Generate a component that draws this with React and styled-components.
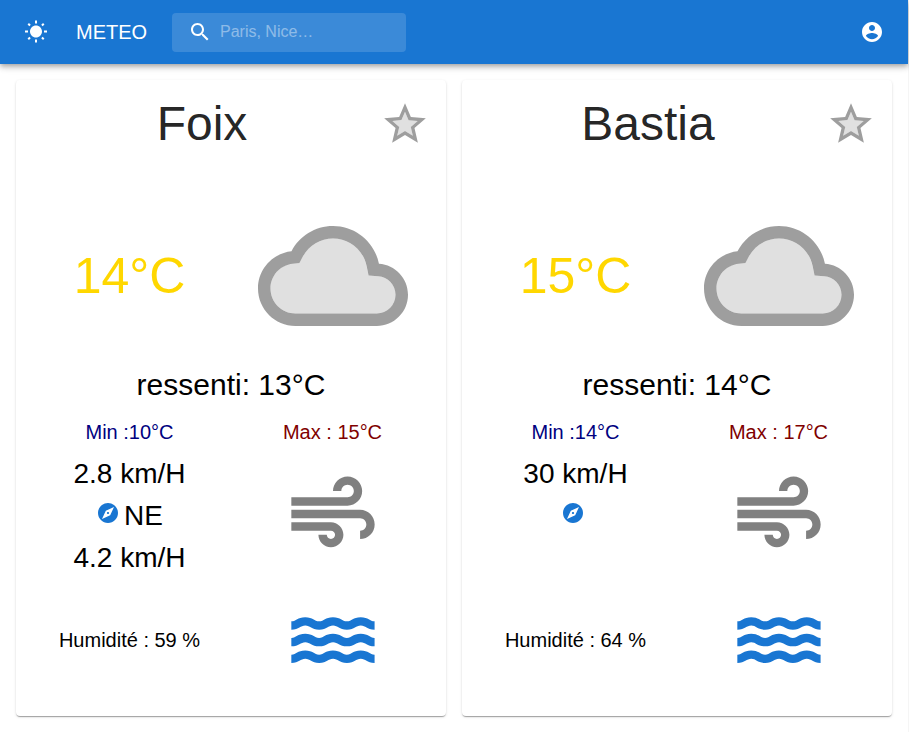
import React from "react";
import styled, { createGlobalStyle } from "styled-components";

const GlobalStyle = createGlobalStyle`
  *, *::before, *::after { box-sizing: border-box; }
  body {
    margin: 0;
    background: #fff;
    color: #000;
    font-family: "Liberation Sans", Arial, sans-serif;
  }
`;

const Page = styled.div`
  min-height: 100vh;
  border-right: 1px solid #f5f5f5;
`;

const AppBar = styled.header`
  display: flex;
  align-items: center;
  height: 64px;
  padding: 0 24px;
  background: #1976d2;
  color: #fff;
  box-shadow: 0 2px 4px -1px rgba(0, 0, 0, 0.2), 0 4px 5px rgba(0, 0, 0, 0.14),
    0 1px 10px rgba(0, 0, 0, 0.12);
`;

const Icon = styled.svg`
  display: block;
  flex: none;
  width: ${(p) => p.$size}px;
  height: ${(p) => p.$size}px;
  color: ${(p) => p.$color || "inherit"};
  fill: currentColor;
`;

const InlineIcon = styled(Icon)`
  display: inline-block;
`;

const Brand = styled.h1`
  min-width: 72px;
  margin: 0 24px 0 28px;
  font-size: 20px;
  font-weight: 400;
  line-height: 32px;
`;

const Search = styled.label`
  display: flex;
  align-items: center;
  gap: 8px;
  width: 234px;
  height: 39px;
  padding: 0 16px;
  border-radius: 4px;
  background: rgba(255, 255, 255, 0.15);
`;

const SearchInput = styled.input`
  flex: 1;
  min-width: 0;
  padding: 0;
  border: 0;
  outline: 0;
  background: transparent;
  color: #fff;
  font: 16px/24px "Liberation Sans", Arial, sans-serif;
  &::placeholder { color: #fff; opacity: 0.42; }
`;

const IconButton = styled.button`
  display: block;
  padding: 0;
  border: 0;
  background: none;
  color: inherit;
  cursor: pointer;
`;

const AccountButton = styled(IconButton)`
  margin-left: auto;
`;

const Grid = styled.main`
  display: grid;
  grid-template-columns: repeat(2, minmax(0, 1fr));
  gap: 16px;
  padding: 16px;
`;

const Card = styled.article`
  padding: 16px 12px;
  border-radius: 4px;
  background: #fff;
  text-align: center;
  box-shadow: 0 2px 1px -1px rgba(0, 0, 0, 0.2), 0 1px 1px rgba(0, 0, 0, 0.14),
    0 1px 3px rgba(0, 0, 0, 0.12);
`;

const CardHeader = styled.div`
  display: grid;
  grid-template-columns: 1fr 50px;
  gap: 4px;
  align-items: center;
  height: 56px;
  padding-right: 4px;
`;

const City = styled.h2`
  margin: 0;
  color: rgba(0, 0, 0, 0.87);
  font-size: 48px;
  font-weight: 400;
  line-height: 56px;
`;

const Row = styled.div`
  display: grid;
  grid-template-columns: repeat(2, minmax(0, 1fr));
  align-items: center;
  justify-items: center;
  height: ${(p) => p.$height}px;
`;

const Weather = styled(Row)`
  margin-top: 40px;
`;

const Temperature = styled.p`
  margin: 0;
  color: #ffd700;
  font-size: 50px;
  line-height: 56px;
`;

const Feels = styled.p`
  margin: 0;
  font-size: 30px;
  line-height: 50px;
`;

const Detail = styled.p`
  margin: 0;
  color: ${(p) => p.$color || "#000"};
  font-size: 20px;
  line-height: 24px;
`;

const Wind = styled.div`
  align-self: start;
  font-size: 28px;
  line-height: 42px;
`;

const Direction = styled.div`
  height: 42px;
  & > svg { margin-right: 4px; }
`;

const Graphic = styled.div`
  font-size: 16px;
`;

const paths = {
  sun: "M6.76 4.84l-1.8-1.79-1.41 1.41 1.79 1.79 1.42-1.41zM4 10.5H1v2h3v-2zm9-9.95h-2V3.5h2V.55zm7.45 3.91l-1.41-1.41-1.79 1.79 1.41 1.41 1.79-1.79zm-3.21 13.7l1.79 1.8 1.41-1.41-1.8-1.79-1.4 1.4zM20 10.5v2h3v-2h-3zm-8-5c-3.31 0-6 2.69-6 6s2.69 6 6 6 6-2.69 6-6-2.69-6-6-6zm-1 16.95h2V19.5h-2v2.95zm-7.45-3.91l1.41 1.41 1.79-1.8-1.41-1.41-1.79 1.8z",
  search:
    "M15.5 14h-.79l-.28-.27C15.41 12.59 16 11.11 16 9.5 16 5.91 13.09 3 9.5 3S3 5.91 3 9.5 5.91 16 9.5 16c1.61 0 3.09-.59 4.23-1.57l.27.28v.79l5 4.99L20.49 19l-4.99-5zm-6 0C7.01 14 5 11.99 5 9.5S7.01 5 9.5 5 14 7.01 14 9.5 11.99 14 9.5 14z",
  account:
    "M12 2C6.48 2 2 6.48 2 12s4.48 10 10 10 10-4.48 10-10S17.52 2 12 2zm0 3c1.66 0 3 1.34 3 3s-1.34 3-3 3-3-1.34-3-3 1.34-3 3-3zm0 14.2c-2.5 0-4.71-1.28-6-3.22.03-1.99 4-3.08 6-3.08 1.99 0 5.97 1.09 6 3.08-1.29 1.94-3.5 3.22-6 3.22z",
  starFill: "m12 15.4-3.76 2.27 1-4.28-3.32-2.88 4.38-.38L12 6.1l1.71 4.04 4.38.38-3.32 2.88 1 4.28z",
  star: "m22 9.24-7.19-.62L12 2 9.19 8.63 2 9.24l5.46 4.73L5.82 21 12 17.27 18.18 21l-1.63-7.03L22 9.24zM12 15.4l-3.76 2.27 1-4.28-3.32-2.88 4.38-.38L12 6.1l1.71 4.04 4.38.38-3.32 2.88 1 4.28L12 15.4z",
  cloudFill:
    "M19.21 12.04l-1.53-.11-.3-1.5C16.88 7.86 14.62 6 12 6 9.94 6 8.08 7.14 7.12 8.96l-.5.95-1.07.11C3.53 10.24 2 11.95 2 14c0 2.21 1.79 4 4 4h13c1.65 0 3-1.35 3-3 0-1.55-1.22-2.86-2.79-2.96z",
  cloud:
    "M19.35 10.04C18.67 6.59 15.64 4 12 4 9.11 4 6.61 5.64 5.36 8.04 2.35 8.36 0 10.9 0 14c0 3.31 2.69 6 6 6h13c2.76 0 5-2.24 5-5 0-2.64-2.05-4.78-4.65-4.96zM19 18H6c-2.21 0-4-1.79-4-4 0-2.05 1.53-3.76 3.56-3.97l1.07-.11.5-.95C8.08 7.14 9.94 6 12 6c2.62 0 4.88 1.86 5.39 4.43l.3 1.5 1.53.11c1.56.1 2.78 1.41 2.78 2.96 0 1.65-1.35 3-3 3z",
  compass:
    "M12 10.9c-.61 0-1.1.49-1.1 1.1s.49 1.1 1.1 1.1c.61 0 1.1-.49 1.1-1.1s-.49-1.1-1.1-1.1zM12 2C6.48 2 2 6.48 2 12s4.48 10 10 10 10-4.48 10-10S17.52 2 12 2zm2.19 12.19L6 18l3.81-8.19L18 6l-3.81 8.19z",
  wind: "M14.5 17c0 1.65-1.35 3-3 3s-3-1.35-3-3h2c0 .55.45 1 1 1s1-.45 1-1-.45-1-1-1H2v-2h9.5c1.65 0 3 1.35 3 3zM19 6.5C19 4.57 17.43 3 15.5 3S12 4.57 12 6.5h2c0-.83.67-1.5 1.5-1.5s1.5.67 1.5 1.5S16.33 8 15.5 8H2v2h13.5c1.93 0 3.5-1.57 3.5-3.5zm-.5 4.5H2v2h16.5c.83 0 1.5.67 1.5 1.5s-.67 1.5-1.5 1.5v2c1.93 0 3.5-1.57 3.5-3.5S20.43 11 18.5 11z",
  wave: "c1.9 0 2.17-1 3.35-1 1.19 0 1.42 1 3.33 1 1.95 0 2.09-1 3.33-1 1.19 0 1.42 1 3.33 1 1.95 0 2.09-1 3.33-1 1.19 0 1.4.98 3.31 1v-2c-1.19 0-1.42-1-3.33-1-1.95 0-2.09 1-3.33 1-1.19 0-1.42-1-3.33-1-1.95 0-2.09 1-3.33 1-1.19 0-1.42-1-3.33-1-1.95 0-2.09 1-3.33 1z",
};

const cities = [
  { name: "Foix", temp: 14, feels: 13, min: 10, max: 15, wind: "2.8", direction: "NE", gust: "4.2", humidity: 59 },
  { name: "Bastia", temp: 15, feels: 14, min: 14, max: 17, wind: "30", humidity: 64 },
];

function CityCard({ city }) {
  return (
    <Card>
      <CardHeader>
        <City>{city.name}</City>
        <IconButton aria-label={`Favori ${city.name}`}>
          <Icon $size={50} $color="#9e9e9e" viewBox="0 0 24 24">
            <path d={paths.starFill} fill="#e0e0e0" />
            <path d={paths.star} />
          </Icon>
        </IconButton>
      </CardHeader>
      <Weather $height={168}>
        <Temperature>{city.temp}°C</Temperature>
        <Icon $size={150} $color="#9e9e9e" viewBox="0 0 24 24">
          <path d={paths.cloudFill} fill="#e0e0e0" />
          <path d={paths.cloud} />
        </Icon>
      </Weather>
      <Feels>ressenti: {city.feels}°C</Feels>
      <Row $height={43}>
        <Detail $color="navy">Min :{city.min}°C</Detail>
        <Detail $color="maroon">Max : {city.max}°C</Detail>
      </Row>
      <Row $height={126}>
        <Wind>
          <div>{city.wind} km/H</div>
          <Direction>
            <InlineIcon $size={24} $color="#1976d2" viewBox="0 0 24 24">
              <path d={paths.compass} />
            </InlineIcon>
            {city.direction}
          </Direction>
          {city.gust && <div>{city.gust} km/H</div>}
        </Wind>
        <Graphic>
          <InlineIcon $size={100} $color="#808080" viewBox="0 0 24 24">
            <path d={paths.wind} />
          </InlineIcon>
        </Graphic>
      </Row>
      <Row $height={121}>
        <Detail>Humidité : {city.humidity} %</Detail>
        <Graphic>
          <InlineIcon $size={100} $color="#1976d2" viewBox="0 0 24 24">
            {[10, 14, 18].map((y) => (
              <path key={y} d={`M2 ${y}${paths.wave}`} />
            ))}
          </InlineIcon>
        </Graphic>
      </Row>
    </Card>
  );
}

export default function App() {
  return (
    <Page>
      <GlobalStyle />
      <AppBar>
        <Icon $size={24} viewBox="0 0 24 24"><path d={paths.sun} /></Icon>
        <Brand>METEO</Brand>
        <Search>
          <Icon $size={24} viewBox="0 0 24 24"><path d={paths.search} /></Icon>
          <SearchInput placeholder="Paris, Nice…" aria-label="Rechercher une ville" />
        </Search>
        <AccountButton aria-label="Compte">
          <Icon $size={24} viewBox="0 0 24 24"><path d={paths.account} /></Icon>
        </AccountButton>
      </AppBar>
      <Grid>
        {cities.map((city) => <CityCard key={city.name} city={city} />)}
      </Grid>
    </Page>
  );
}
